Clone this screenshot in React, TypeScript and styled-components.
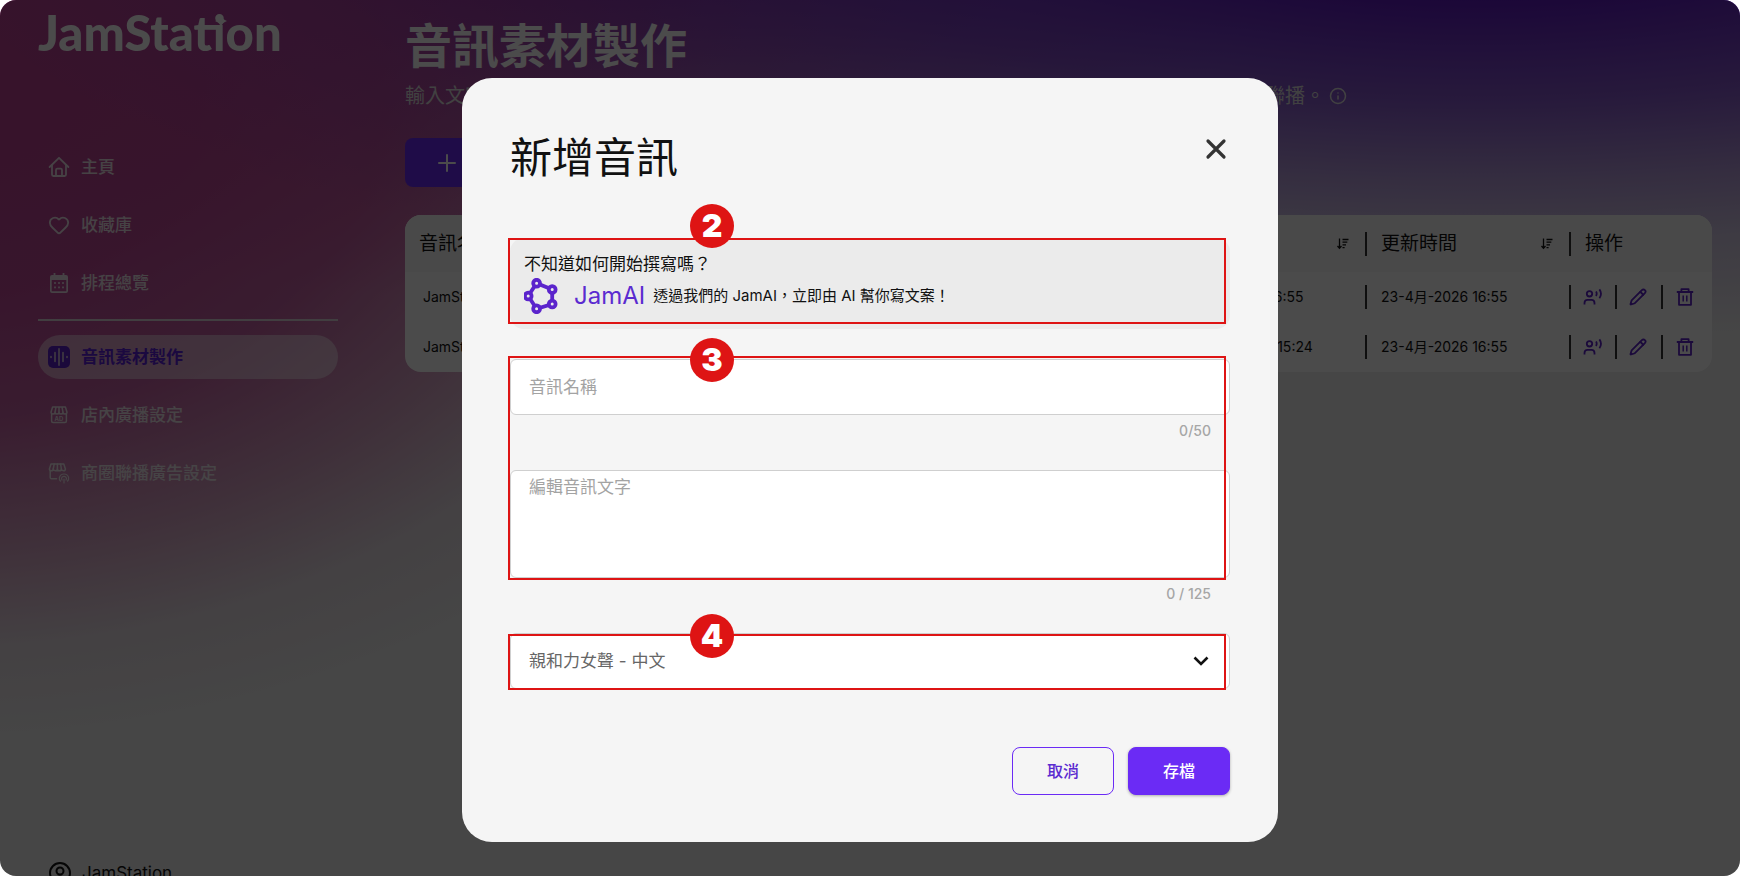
import React from 'react';
import styled, { createGlobalStyle, css } from 'styled-components';
import { Heart, Info, Pencil } from 'lucide-react';

const GlobalStyle = createGlobalStyle`
  *, *::before, *::after { box-sizing: border-box; }
  body {
    margin: 0;
    background: #ffffff;
    font-family: Inter, "Noto Sans CJK TC", sans-serif;
    color: #111111;
  }
  h1, h2, p { margin: 0; font-weight: 400; }
  button, input, textarea, select { font: inherit; margin: 0; }
`;

const purple = '#6b2bf5';
const red = '#de1414';

/* ---------- page ---------- */

const Page = styled.div`
  position: relative;
  display: flex;
  height: 100vh;
  overflow: hidden;
  border-radius: 16px;
  background:
    radial-gradient(ellipse 92% 50% at 85% -10%, rgba(94, 26, 190, 1) 20%, rgba(94, 30, 190, 0.72) 43%, rgba(98, 36, 190, 0.41) 61%, rgba(100, 50, 190, 0.2) 75%, rgba(110, 70, 190, 0) 97%),
    radial-gradient(ellipse 52% 72% at -4% 12%, rgba(186, 64, 146, 1) 0%, rgba(186, 64, 146, 0.95) 30%, rgba(186, 66, 146, 0.82) 50%, rgba(190, 80, 150, 0.48) 70%, rgba(190, 100, 160, 0.12) 86%, rgba(190, 120, 170, 0) 100%),
    radial-gradient(ellipse 45% 42% at 28% -8%, rgba(172, 58, 150, 0.95) 20%, rgba(176, 70, 150, 0.6) 55%, rgba(190, 110, 170, 0) 100%),
    #ececec;
`;

const Sidebar = styled.aside`
  display: flex;
  flex-direction: column;
  flex: 0 0 376px;
  height: calc(100vh + 9px);
  padding: 4px 38px 0;
`;

const Logo = styled.div`
  position: relative;
  height: 56px;
  margin-bottom: 85px;
  font-family: Lato, sans-serif;
  font-size: 49px;
  font-weight: 900;
  line-height: 56px;
  color: #ffffff;
`;

const NavItem = styled.a<{ $active?: boolean }>`
  display: flex;
  align-items: center;
  gap: 11px;
  height: 44px;
  margin-bottom: 14px;
  padding-left: 10px;
  border-radius: 22px;
  font-size: 17px;
  line-height: 24px;
  font-weight: 500;
  text-decoration: none;
  color: #f2f2f2;
  opacity: 0.9;
  ${({ $active }) => $active && css`
    color: #5b20d8;
    background: rgba(255, 255, 255, 0.45);
    font-weight: 700;
    opacity: 1;
  `}
  svg { flex: none; }
`;

const Divider = styled.hr`
  width: 100%;
  height: 2px;
  margin: 0 0 14px;
  border: 0;
  background: #dcd4da;
`;

const User = styled.a`
  display: flex;
  align-items: center;
  gap: 11px;
  height: 24px;
  margin-top: auto;
  padding-left: 11px;
  font-size: 17px;
  line-height: 24px;
  color: #111111;
  text-decoration: none;
`;

const Main = styled.main`
  flex: 1;
  min-width: 0;
  padding: 16px 28px 0 29px;
`;

const PageTitle = styled.h1`
  font-size: 47px;
  font-weight: 700;
  line-height: 60px;
  color: #ffffff;
`;

const Subtitle = styled.p`
  display: flex;
  align-items: center;
  gap: 4px;
  margin: 6px 0 28px;
  font-size: 20px;
  line-height: 28px;
  white-space: nowrap;
  color: #dedede;
`;

const AddButton = styled.button`
  display: flex;
  align-items: center;
  width: 180px;
  height: 49px;
  margin-bottom: 28px;
  padding: 0 32px;
  border: 0;
  border-radius: 8px;
  background: ${purple};
  color: #ffffff;
`;

const Table = styled.table`
  width: 100%;
  table-layout: fixed;
  border-collapse: collapse;
  border-radius: 16px;
  overflow: hidden;
  background: #ffffff;
  font-size: 14px;
  thead tr { height: 57px; background: #f8f8f8; }
  tbody tr { height: 50px; }
  th { font-size: 19px; font-weight: 400; text-align: left; }
  th, td { padding: 0; white-space: nowrap; }
`;

const Cell = styled.div<{ $rule?: boolean; $pad?: number }>`
  display: flex;
  align-items: center;
  justify-content: space-between;
  height: 24px;
  line-height: 24px;
  padding: 0 16px 0 ${({ $pad }) => $pad ?? 14}px;
  ${({ $rule }) => $rule && css`border-left: 2px solid #333333;`}
`;

const Actions = styled.div`
  display: flex;
`;

const ActionButton = styled.button`
  display: flex;
  align-items: center;
  width: 46px;
  height: 24px;
  padding: 0 0 0 12px;
  border: 0;
  border-left: 2px solid #333333;
  background: none;
  color: #5d22c8;
  svg { flex: none; }
`;

/* ---------- dialog ---------- */

const Overlay = styled.div`
  position: absolute;
  inset: 0;
  display: flex;
  justify-content: center;
  align-items: flex-start;
  padding-top: 78px;
  background: rgba(0, 0, 0, 0.705);
`;

const Dialog = styled.section`
  width: 816px;
  max-width: 100%;
  padding: 50px 48px 47px;
  border-radius: 30px;
  background: #f5f5f5;
`;

const DialogHeader = styled.header`
  display: flex;
  justify-content: space-between;
  align-items: flex-start;
  margin-bottom: 50px;
`;

const DialogTitle = styled.h2`
  font-size: 42px;
  line-height: 60px;
`;

const CloseButton = styled.button`
  display: flex;
  margin-top: 7px;
  padding: 0;
  border: 0;
  background: none;
  color: #333333;
`;

const Marked = styled.div`
  position: relative;
`;

const Frame = styled.div<{ $top: number; $bottom: number }>`
  position: absolute;
  top: ${({ $top }) => $top}px;
  bottom: ${({ $bottom }) => $bottom}px;
  left: -2px;
  right: 4px;
  border: 2px solid ${red};
  pointer-events: none;
`;

const Badge = styled.span<{ $top: number }>`
  position: absolute;
  top: ${({ $top }) => $top}px;
  left: 180px;
  width: 44px;
  height: 44px;
  border-radius: 50%;
  background: ${red};
  font-size: 32px;
  font-weight: 900;
  line-height: 44px;
  text-align: center;
  color: #ffffff;
`;

const AiCard = styled.div`
  height: 91px;
  margin-bottom: 30px;
  padding: 14px 14px 0;
  border-radius: 14px;
  background: #ebebeb;
`;

const AiQuestion = styled.p`
  font-size: 17px;
  line-height: 24px;
`;

const AiRow = styled.div`
  display: flex;
  align-items: center;
  height: 36px;
  margin-top: 2px;
  font-size: 15px;
  line-height: 24px;
`;

const AiName = styled.span`
  margin: 0 8px 0 16px;
  font-size: 24px;
  line-height: 32px;
  color: #5b2bd0;
`;

const fieldStyle = css`
  display: block;
  width: 100%;
  border: 1px solid #cfcfcf;
  border-radius: 6px;
  background: #ffffff;
  font-size: 17px;
  line-height: 24px;
  outline: none;
  &::placeholder { color: #a3a3a3; opacity: 1; }
`;

const TextInput = styled.input`
  ${fieldStyle}
  height: 56px;
  padding: 0 18px;
`;

const TextArea = styled.textarea`
  ${fieldStyle}
  height: 108px;
  padding: 4px 18px;
  resize: none;
`;

const Counter = styled.p`
  margin: 6px 19px 29px;
  font-size: 14px;
  font-weight: 500;
  line-height: 20px;
  text-align: right;
  color: #a6a6a6;
`;

const Select = styled.select`
  ${fieldStyle}
  height: 56px;
  padding: 0 18px;
  appearance: none;
  color: #666666;
`;

const SelectArrow = styled.svg`
  position: absolute;
  right: 20px;
  top: 19px;
  pointer-events: none;
`;

const DialogFooter = styled.footer`
  display: flex;
  justify-content: flex-end;
  gap: 14px;
  margin-top: 58px;
`;

const Button = styled.button<{ $primary?: boolean }>`
  width: 102px;
  height: 48px;
  padding: 0;
  border: 1px solid ${purple};
  border-radius: 8px;
  background: ${({ $primary }) => ($primary ? purple : 'transparent')};
  box-shadow: ${({ $primary }) => ($primary ? '0 1px 3px rgba(0, 0, 0, 0.3)' : 'none')};
  font-size: 16px;
  font-weight: 500;
  line-height: 24px;
  color: ${({ $primary }) => ($primary ? '#ffffff' : '#5b2bd0')};
`;

/* ---------- icons ---------- */

const Sparkle = styled.svg`
  position: absolute;
  left: 177px;
  top: 11px;
`;

const HomeIcon = () => (
  <svg width="22" height="22" viewBox="0 0 22 22" fill="none" stroke="currentColor" strokeWidth="1.8" strokeLinecap="round" strokeLinejoin="round">
    <path d="M1.6 11 L11 1.8 L20.4 11" />
    <path d="M4 9 V18.6 Q4 20 5.4 20 H16.6 Q18 20 18 18.6 V9" />
    <path d="M8 20 V14 Q8 12.6 9.4 12.6 H12.6 Q14 12.6 14 14 V20" />
  </svg>
);

const CalendarIcon = () => (
  <svg width="22" height="22" viewBox="0 0 22 22" fill="currentColor">
    <path fillRule="evenodd" d="M5.6 1h1.8v2h7.2V1h1.8v2H18a2 2 0 0 1 2 2v14a2 2 0 0 1-2 2H4a2 2 0 0 1-2-2V5a2 2 0 0 1 2-2h1.6zM3.7 8v11.3h14.6V8z" />
    {[11, 15.4].map(y => [7, 11, 15].map(x => <rect key={`${x}-${y}`} x={x - 0.9} y={y - 0.9} width="1.8" height="1.8" />))}
  </svg>
);

const AudioIcon = () => (
  <svg width="22" height="22" viewBox="0 0 22 22">
    <rect width="22" height="22" rx="5" fill="#5b20c8" />
    <g stroke="#e2d2dd" strokeWidth="1.5" strokeLinecap="round">
      <path d="M11 2.8V19.2M7 6.5V15.5M15 6.5V15.5M3 10.4V11.6M19 10.4V11.6" />
    </g>
  </svg>
);

const StoreAdIcon = () => (
  <svg width="22" height="22" viewBox="0 0 22 22" fill="none" stroke="currentColor" strokeWidth="1.5" strokeLinejoin="round">
    <path d="M4.6 3H17.4L19 8.3Q19 10 17 10Q15 10 15 8.3Q15 10 13 10Q11 10 11 8.3Q11 10 9 10Q7 10 7 8.3Q7 10 5 10Q3 10 3 8.3Z" />
    <path d="M7 8.3L8 3M11 8.3V3M15 8.3L14 3M3.6 10V17Q3.6 18.5 5 18.5H17Q18.4 18.5 18.4 17V10" />
    <text x="11" y="17" fontSize="6" fontWeight="700" textAnchor="middle" stroke="none" fill="currentColor">AD</text>
  </svg>
);

const StoreCastIcon = () => (
  <svg width="22" height="22" viewBox="0 0 22 22" fill="none" stroke="currentColor" strokeWidth="1.5" strokeLinejoin="round" strokeLinecap="round">
    <path d="M3 2H15.8L17.4 7Q17.4 8.8 15.5 8.8Q13.6 8.8 13.4 7Q13.4 8.8 11.4 8.8Q9.4 8.8 9.4 7Q9.4 8.8 7.4 8.8Q5.4 8.8 5.2 7Q5.2 8.8 3.3 8.8Q1.4 8.8 1.4 7Z" />
    <path d="M5.2 7L6.2 2M9.4 7V2M13.4 7L12.6 2M2.2 9V15.5Q2.2 16.8 3.5 16.8H8.5" />
    <path strokeWidth="1.2" d="M12.4 19Q11 17.5 11.4 15.5Q12.4 12 16 12Q19.6 12 20.6 15.5Q21 17.5 19.6 19M14 18Q13 16.5 14 15.2Q16 13.5 18 15.2Q19 16.5 18 18M16 17V21" />
  </svg>
);

const PlusIcon = () => (
  <svg width="20" height="20" viewBox="0 0 20 20" stroke="currentColor" strokeWidth="2" strokeLinecap="round">
    <path d="M10 2V18M2 10H18" />
  </svg>
);

const UserIcon = () => (
  <svg width="22" height="22" viewBox="0 0 22 22" fill="none" stroke="currentColor" strokeWidth="2">
    <circle cx="11" cy="11" r="10" />
    <circle cx="11" cy="9" r="3.5" />
    <path d="M4.5 18Q7 14.5 11 14.5Q15 14.5 17.5 18" />
  </svg>
);

const SortIcon = () => (
  <svg width="12" height="12" viewBox="0 0 12 12" fill="none" stroke="currentColor" strokeWidth="1.3">
    <path d="M2.5 0.5V10M0.5 8L2.5 10.3L4.5 8" />
    <path d="M5.5 1.5H11.5M5.5 4.2H10.3M5.5 6.9H9M5.5 9.6H7.6" />
  </svg>
);

const VoiceIcon = () => (
  <svg width="20" height="20" viewBox="0 0 20 20" fill="none" stroke="currentColor" strokeWidth="1.8">
    <circle cx="6.5" cy="6.8" r="2.7" />
    <path d="M1.5 17.5V16Q1.5 12.9 4.6 12.9H8.4Q11.5 12.9 11.5 16V17.5" />
    <path d="M13 4.6Q14.4 6.8 13 9M16.4 2.4Q19.6 6.8 16.4 11.2" />
  </svg>
);

const TrashIcon = () => (
  <svg width="20" height="20" viewBox="0 0 20 20" fill="none" stroke="currentColor" strokeWidth="1.8" strokeLinejoin="round">
    <path d="M1.8 5H18.2M6.4 5V2.2H13.6V5M4 5V17.8H16V5" />
    <path strokeWidth="1.5" d="M8.2 8.4V14.6M11.8 8.4V14.6" />
  </svg>
);

const CloseIcon = () => (
  <svg width="28" height="28" viewBox="0 0 28 28" stroke="currentColor" strokeWidth="3.2" strokeLinecap="round">
    <path d="M6 6L22 22M22 6L6 22" />
  </svg>
);

const JamAiIcon = () => {
  const nodes = [[4.2, 18], [12.6, 5.2], [28.2, 11.6], [28.2, 26], [12.6, 30.8]];
  return (
    <svg width="34" height="36" viewBox="0 0 34 36" fill="none" stroke="#5b24cc" strokeWidth="3.8">
      <path d={`M${nodes.map(n => n.join(' ')).join('L')}Z`} />
      {nodes.map(([x, y]) => <circle key={`${x}-${y}`} cx={x} cy={y} r="3.4" fill="#ebebeb" />)}
    </svg>
  );
};

/* ---------- data ---------- */

const rows = [
  { name: 'JamStation', created: '23-4月-2026 16:55', updated: '23-4月-2026 16:55' },
  { name: 'JamStation', created: '24-04月-2026 15:24', updated: '23-4月-2026 16:55' },
];

export default function App() {
  return (
    <>
      <GlobalStyle />
      <Page>
        <Sidebar>
          <Logo>
            JamStation
            <Sparkle width="12" height="12" viewBox="0 0 12 12" fill="currentColor">
              <path d="M6 0Q7.4 4.6 12 6Q7.4 7.4 6 12Q4.6 7.4 0 6Q4.6 4.6 6 0Z" />
            </Sparkle>
          </Logo>
          <nav>
            <NavItem href="#home"><HomeIcon />主頁</NavItem>
            <NavItem href="#favorites"><Heart size={22} strokeWidth={2} />收藏庫</NavItem>
            <NavItem href="#schedule"><CalendarIcon />排程總覽</NavItem>
            <Divider />
            <NavItem href="#audio" $active><AudioIcon />音訊素材製作</NavItem>
            <NavItem href="#store"><StoreAdIcon />店內廣播設定</NavItem>
            <NavItem href="#district"><StoreCastIcon />商圈聯播廣告設定</NavItem>
          </nav>
          <User href="#account"><UserIcon />JamStation</User>
        </Sidebar>

        <Main>
          <PageTitle>音訊素材製作</PageTitle>
          <Subtitle>
            輸入文字即可透過人工智慧將文案轉換成自然流暢的語音廣告，並輕鬆應用於店內的廣播以及商圈聯播。
            <Info size={18} strokeWidth={2} />
          </Subtitle>
          <AddButton type="button" aria-label="新增音訊"><PlusIcon /></AddButton>
          <Table>
            <colgroup>
              <col />
              <col width="204" />
              <col width="204" />
              <col width="143" />
            </colgroup>
            <thead>
              <tr>
                <th><Cell>音訊名稱</Cell></th>
                <th><Cell $rule>建立時間<SortIcon /></Cell></th>
                <th><Cell $rule>更新時間<SortIcon /></Cell></th>
                <th><Cell $rule>操作</Cell></th>
              </tr>
            </thead>
            <tbody>
              {rows.map(row => (
                <tr key={row.created}>
                  <td><Cell $pad={18}>{row.name}</Cell></td>
                  <td><Cell $rule>{row.created}</Cell></td>
                  <td><Cell $rule>{row.updated}</Cell></td>
                  <td>
                    <Actions>
                      <ActionButton type="button" aria-label="播放"><VoiceIcon /></ActionButton>
                      <ActionButton type="button" aria-label="編輯"><Pencil size={18} strokeWidth={2.4} /></ActionButton>
                      <ActionButton type="button" aria-label="刪除"><TrashIcon /></ActionButton>
                    </Actions>
                  </td>
                </tr>
              ))}
            </tbody>
          </Table>
        </Main>

        <Overlay>
          <Dialog role="dialog" aria-labelledby="dialog-title">
            <DialogHeader>
              <DialogTitle id="dialog-title">新增音訊</DialogTitle>
              <CloseButton type="button" aria-label="關閉"><CloseIcon /></CloseButton>
            </DialogHeader>

            <Marked>
              <AiCard>
                <AiQuestion>不知道如何開始撰寫嗎？</AiQuestion>
                <AiRow>
                  <JamAiIcon />
                  <AiName>JamAI</AiName>
                  透過我們的 JamAI，立即由 AI 幫你寫文案！
                </AiRow>
              </AiCard>
              <Frame $top={0} $bottom={5}><Badge $top={-36}>2</Badge></Frame>
            </Marked>

            <Marked>
              <TextInput aria-label="音訊名稱" placeholder="音訊名稱" />
              <Counter>0/50</Counter>
              <TextArea aria-label="編輯音訊文字" placeholder="編輯音訊文字" />
              <Frame $top={-3} $bottom={-2}><Badge $top={-20}>3</Badge></Frame>
            </Marked>
            <Counter>0 / 125</Counter>

            <Marked>
              <Select aria-label="聲音" defaultValue="warm">
                <option value="warm">親和力女聲 - 中文</option>
              </Select>
              <SelectArrow width="18" height="18" viewBox="0 0 18 18" fill="none" stroke="#111111" strokeWidth="2.6">
                <path d="M2.5 5.5L9 12L15.5 5.5" />
              </SelectArrow>
              <Frame $top={1} $bottom={-1}><Badge $top={-22}>4</Badge></Frame>
            </Marked>

            <DialogFooter>
              <Button type="button">取消</Button>
              <Button type="button" $primary>存檔</Button>
            </DialogFooter>
          </Dialog>
        </Overlay>
      </Page>
    </>
  );
}
